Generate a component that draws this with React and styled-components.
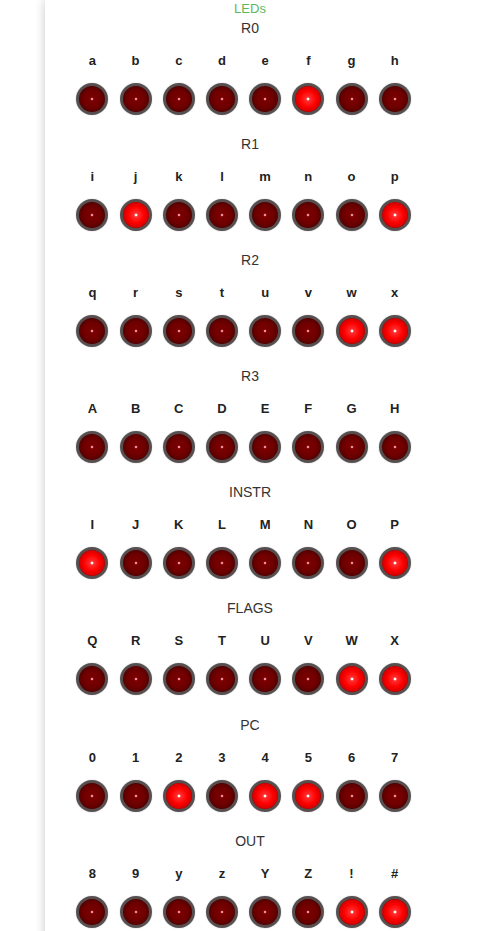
import React from 'react';
import styled, { createGlobalStyle } from 'styled-components';

const GlobalStyle = createGlobalStyle`
  html, body {
    margin: 0;
    padding: 0;
    background: #ffffff;
    overflow: hidden;
  }
  body {
    font-family: "Liberation Sans", Arial, sans-serif;
  }
`;

const Panel = styled.div`
  margin-left: 45px;
  width: calc(100% - 45px);
  min-height: 931px;
  padding-top: 0.5px;
  background: #ffffff;
  box-shadow: 0 0 10px rgba(0, 0, 0, 0.22);
`;

const Content = styled.div`
  width: 410px;
  display: flex;
  flex-direction: column;
`;

const Heading = styled.div`
  text-align: center;
  font-size: 13px;
  line-height: 16px;
  color: #5cb85c;
  margin-bottom: 2px;
`;

const Section = styled.div`
  display: flex;
  flex-direction: column;
  margin-bottom: 20.2px;
`;

const SectionTitle = styled.div`
  text-align: center;
  font-size: 14px;
  line-height: 18px;
  color: #333;
  margin-bottom: 16px;
`;

const Row = styled.div`
  display: grid;
  grid-template-columns: repeat(8, 43.2px);
  padding-left: 25.8px;
  margin-bottom: ${p => p.$gap || 0}px;
`;

const Label = styled.div`
  text-align: center;
  font-size: 13px;
  font-weight: bold;
  line-height: 16px;
  color: #222;
`;

const Cell = styled.div`
  display: flex;
  justify-content: center;
`;

const Led = styled.div`
  width: 26px;
  height: 26px;
  border-radius: 50%;
  border: 3px solid #574f4f;
  box-shadow: 0 0 1px rgba(0, 0, 0, 0.5);
  background: ${p => p.$on
    ? 'radial-gradient(circle, #ffffff 0 1px, #ff3030 1.8px, #ff0000 8px, #d80000 12px, #b00000 13px)'
    : 'radial-gradient(circle, #e890a0 0 0.9px, #7a0000 1.7px, #700000 8px, #5c0000 12px, #4a0000 13px)'};
`;

const rows = [
  { name: 'R0', keys: 'abcdefgh'.split(''), on: [5] },
  { name: 'R1', keys: 'ijklmnop'.split(''), on: [1, 7] },
  { name: 'R2', keys: 'qrstuvwx'.split(''), on: [6, 7] },
  { name: 'R3', keys: 'ABCDEFGH'.split(''), on: [] },
  { name: 'INSTR', keys: 'IJKLMNOP'.split(''), on: [0, 7] },
  { name: 'FLAGS', keys: 'QRSTUVWX'.split(''), on: [6, 7] },
  { name: 'PC', keys: '01234567'.split(''), on: [2, 4, 5] },
  { name: 'OUT', keys: ['8', '9', 'y', 'z', 'Y', 'Z', '!', '#'], on: [6, 7] },
];

function LedSection({ name, keys, on }) {
  return (
    <Section>
      <SectionTitle>{name}</SectionTitle>
      <Row $gap={14}>
        {keys.map(k => <Label key={k}>{k}</Label>)}
      </Row>
      <Row>
        {keys.map((k, i) => (
          <Cell key={k}>
            <Led $on={on.includes(i)} />
          </Cell>
        ))}
      </Row>
    </Section>
  );
}

export default function App() {
  return (
    <>
      <GlobalStyle />
      <Panel>
        <Content>
          <Heading>LEDs</Heading>
          {rows.map(r => <LedSection key={r.name} {...r} />)}
        </Content>
      </Panel>
    </>
  );
}
